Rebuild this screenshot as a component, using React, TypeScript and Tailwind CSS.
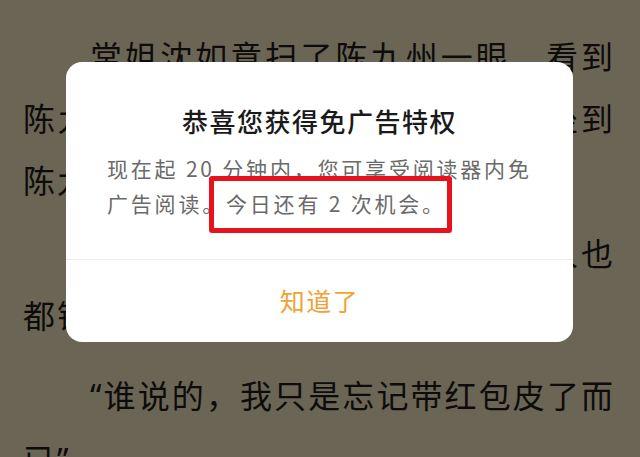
const Q = ({ c }: { c: string }) => (
  <span style={{ fontFamily: '"Noto Sans", "Liberation Sans", sans-serif' }}>{c}</span>
);

const lines = [
  { text: <>常姐沈如意扫了陈九州一眼，看到</>, indent: true, full: true, gap: "" },
  { text: <>陈九州手里空空如也，又想起他没坐到</>, indent: false, full: true, gap: "" },
  { text: <>陈九州的座位。</>, indent: false, full: false, gap: "" },
  { text: <>周围人见状，纷纷附和，其他人也</>, indent: true, full: true, gap: "mt-[11px]" },
  { text: <>都错愕地看着他。</>, indent: false, full: false, gap: "" },
  {
    text: (
      <>
        <Q c="“" />
        谁说的，我只是忘记带红包皮了而
      </>
    ),
    indent: true,
    full: true,
    gap: "mt-[18px]",
  },
  {
    text: (
      <>
        已<Q c="”" />
      </>
    ),
    indent: false,
    full: false,
    gap: "",
  },
];

function ReaderPage() {
  return (
    <div className="pt-[24px] pl-[23px] pr-[25px] text-[32px] leading-[62px] tracking-[2px] text-[#1c1914]">
      {lines.map((l, i) => (
        <p
          key={i}
          className={`whitespace-nowrap ${l.gap} ${l.indent ? "indent-[67px]" : ""} ${
            l.full ? "text-justify [text-align-last:justify]" : ""
          }`}
        >
          {l.text}
        </p>
      ))}
    </div>
  );
}

/**弹窗：免广告特权提示 */
function PrivilegeDialog() {
  return (
    <div className="w-[507px] h-[280px] rounded-[16px] bg-white flex flex-col">
      <div className="h-[197px] pt-[41px] px-[41px]">
        <h2 className="text-center text-[26px] leading-[36px] tracking-[1.5px] font-medium text-[#1a1a1a]">
          恭喜您获得免广告特权
        </h2>
        <div className="mt-[12px] text-[21px] leading-[35px] tracking-[2.8px] text-[#6a6a6a] whitespace-nowrap">
          <p>现在起 20 分钟内，您可享受阅读器内免</p>
          <p>
            广告阅读。
            <span className="relative">
              今日还有 2 次机会。
              <span className="absolute -left-[17px] -right-[6px] -top-[12px] -bottom-[15px] border-[5px] border-[#e8121c] rounded-[3px]" />
            </span>
          </p>
        </div>
      </div>
      <div className="h-px bg-[#ececec]" />
      <button className="flex-1 text-[25px] tracking-[1.5px] text-[#f0a236]">知道了</button>
    </div>
  );
}

export default function App() {
  return (
    <div
      className="relative w-[640px] h-[457px] overflow-hidden bg-[#d6caac]"
      style={{ fontFamily: '"Noto Sans CJK SC", "Noto Sans", sans-serif' }}
    >
      <ReaderPage />
      <div className="absolute inset-0 bg-black/50 pt-[62px] pl-[66px]">
        <PrivilegeDialog />
      </div>
    </div>
  );
}
